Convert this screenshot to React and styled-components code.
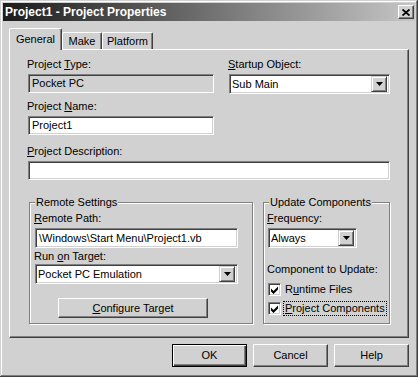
import React from 'react';
import styled, { createGlobalStyle } from 'styled-components';

const face = '#d1d1d1';
const shadow = '#808080';
const dark = '#404040';

const GlobalStyle = createGlobalStyle`
  html, body { margin: 0; padding: 0; background: ${face}; }
  body { font-family: "Liberation Sans", Arial, sans-serif; font-size: 11px; color: #000; }
`;

const Window = styled.div`
  width: 418px;
  height: 377px;
  box-sizing: border-box;
  padding: 3px;
  background: ${face};
  display: flex;
  flex-direction: column;
  box-shadow: inset -1px -1px ${dark}, inset 1px 1px ${face}, inset -2px -2px ${shadow}, inset 2px 2px #fff;
`;

const TitleBar = styled.div`
  height: 18px;
  display: flex;
  align-items: center;
  justify-content: space-between;
  padding: 0 1px 0 2px;
  background: linear-gradient(90deg, #1c1c1c 0%, #c6c6c6 100%);
`;

const TitleText = styled.span`
  color: #fff;
  font-weight: bold;
  font-size: 12px;
  line-height: 14px;
  white-space: nowrap;
`;

const CloseButton = styled.span`
  width: 16px;
  height: 14px;
  box-sizing: border-box;
  background: ${face};
  border: 1px solid;
  border-color: #fff ${dark} ${dark} #fff;
  box-shadow: inset -1px -1px ${shadow};
  display: flex;
  align-items: center;
  justify-content: center;
`;

const Body = styled.div`
  flex: 1;
  display: flex;
  flex-direction: column;
  padding: 7px 6px 0 6px;
`;

const TabStrip = styled.div`
  display: flex;
  align-items: flex-end;
  height: 22px;
  margin-bottom: -1px;
  position: relative;
  z-index: 1;
`;

const Tab = styled.div`
  width: ${p => p.$w}px;
  height: ${p => (p.$active ? 22 : 17)}px;
  margin-bottom: ${p => (p.$active ? 0 : 1)}px;
  box-sizing: border-box;
  background: ${face};
  border-top: 1px solid #fff;
  border-left: 1px solid #fff;
  border-right: 1px solid ${dark};
  border-radius: 2px 2px 0 0;
  box-shadow: inset -1px 0 ${shadow};
  display: flex;
  align-items: center;
  justify-content: center;
  padding-top: ${p => (p.$active ? 0 : 1)}px;
  line-height: 13px;
  white-space: nowrap;
`;

const Panel = styled.div`
  width: 400px;
  height: 289px;
  box-sizing: border-box;
  border: 1px solid;
  border-color: #fff ${dark} ${dark} #fff;
  box-shadow: inset -1px -1px ${shadow};
  padding: 8px 18px 0 18px;
  display: flex;
  flex-direction: column;
`;

const TopGrid = styled.div`
  display: grid;
  grid-template-columns: 186px 161px;
  column-gap: 15px;
  row-gap: 6px;
  align-items: start;
`;

const Field = styled.div`
  display: flex;
  flex-direction: column;
  gap: ${p => p.$gap ?? 3}px;
  margin-top: ${p => p.$mt ?? 0}px;
`;

const Label = styled.span`
  line-height: 13px;
  height: 13px;
  margin-left: -1px;
  white-space: nowrap;
`;

const Sunken = styled.div`
  width: ${p => (p.$w ? `${p.$w}px` : '100%')};
  height: ${p => p.$h ?? 19}px;
  box-sizing: border-box;
  background: ${p => (p.$readOnly ? face : '#fff')};
  border: 1px solid;
  border-color: ${shadow} #fff #fff ${shadow};
  box-shadow: inset 1px 1px ${dark}, inset -1px -1px ${face};
  display: flex;
  align-items: center;
  justify-content: space-between;
  padding: 2px 2px 2px ${p => p.$pl ?? 3}px;
  line-height: 13px;
  white-space: nowrap;
  overflow: hidden;
`;

const DropButton = styled.span`
  flex: none;
  width: 16px;
  height: 16px;
  box-sizing: border-box;
  background: ${face};
  border: 1px solid;
  border-color: ${face} ${dark} ${dark} ${face};
  box-shadow: inset 1px 1px #fff, inset -1px -1px ${shadow};
  display: flex;
  align-items: center;
  justify-content: center;
`;

const GroupRow = styled.div`
  display: flex;
  gap: 10px;
  margin-top: 22px;
  padding-left: 1px;
`;

const GroupBox = styled.div`
  position: relative;
  width: ${p => p.$w}px;
  height: 122px;
  box-sizing: border-box;
  border: 1px solid ${shadow};
  box-shadow: inset 1px 1px #fff, 1px 1px #fff;
  padding: 9px 0 0 ${p => p.$pl}px;
  display: flex;
  flex-direction: column;
`;

const Caption = styled.span`
  position: absolute;
  top: -7px;
  left: 5px;
  padding: 0 1px;
  background: ${face};
  line-height: 13px;
  white-space: nowrap;
`;

const Button = styled.div`
  width: ${p => p.$w}px;
  height: ${p => p.$h}px;
  box-sizing: border-box;
  background: ${face};
  border: 1px solid;
  border-color: ${p => (p.$default ? '#000' : `#fff ${dark} ${dark} #fff`)};
  box-shadow: ${p =>
    p.$default
      ? `inset 1px 1px #fff, inset -1px -1px ${dark}, inset -2px -2px ${shadow}`
      : `inset -1px -1px ${shadow}`};
  display: flex;
  align-items: center;
  justify-content: center;
  margin-left: ${p => p.$ml ?? 0}px;
  margin-top: ${p => p.$mt ?? 0}px;
  line-height: 13px;
  white-space: nowrap;
`;

const CheckList = styled.div`
  display: flex;
  flex-direction: column;
  gap: 2px;
  margin-top: 5px;
`;

const CheckRow = styled.div`
  display: flex;
  align-items: center;
  height: 17px;
  gap: 2px;
`;

const CheckBox = styled.span`
  width: 13px;
  height: 13px;
  box-sizing: border-box;
  background: #fff;
  border: 1px solid;
  border-color: ${shadow} #fff #fff ${shadow};
  box-shadow: inset 1px 1px ${dark}, inset -1px -1px ${face};
  display: flex;
  align-items: center;
  justify-content: center;
`;

const CheckText = styled.span`
  line-height: 13px;
  padding: 0 1px;
  border: 1px dotted ${p => (p.$focus ? '#000' : 'transparent')};
  white-space: nowrap;
`;

const ButtonRow = styled.div`
  display: flex;
  justify-content: flex-end;
  gap: 6px;
  margin-top: 6px;
  width: 400px;
`;

const Arrow = () => (
  <svg width="7" height="4" viewBox="0 0 7 4">
    <polygon points="0,0 7,0 3.5,4" fill="#000" />
  </svg>
);

const Check = () => (
  <svg width="7" height="8" viewBox="0 0 7 8">
    <polygon points="0,2.5 2.5,5 7,0.5 7,3.5 2.5,8 0,5.5" fill="#000" />
  </svg>
);

const Combo = ({ w, children }) => (
  <Sunken $w={w} $h={20} $pl={2}>
    <span>{children}</span>
    <DropButton>
      <Arrow />
    </DropButton>
  </Sunken>
);

export default function App() {
  return (
    <>
      <GlobalStyle />
      <Window>
        <TitleBar>
          <TitleText>Project1 - Project Properties</TitleText>
          <CloseButton>
            <svg width="8" height="7" viewBox="0 0 8 7">
              <path d="M0.5 0.5 L7.5 6.5 M7.5 0.5 L0.5 6.5" stroke="#000" strokeWidth="1.8" />
            </svg>
          </CloseButton>
        </TitleBar>
        <Body>
          <TabStrip>
            <Tab $w={53} $active>General</Tab>
            <Tab $w={40}>Make</Tab>
            <Tab $w={51}>Platform</Tab>
          </TabStrip>
          <Panel>
            <TopGrid>
              <Field>
                <Label>Project <u>T</u>ype:</Label>
                <Sunken $readOnly>Pocket PC</Sunken>
              </Field>
              <Field>
                <Label><u>S</u>tartup Object:</Label>
                <Combo w={161}>Sub Main</Combo>
              </Field>
              <Field>
                <Label>Project <u>N</u>ame:</Label>
                <Sunken>Project1</Sunken>
              </Field>
            </TopGrid>
            <Field $mt={10}>
              <Label><u>P</u>roject Description:</Label>
              <Sunken />
            </Field>
            <GroupRow>
              <GroupBox $w={224} $pl={5}>
                <Caption>Remote Settings</Caption>
                <Field>
                  <Label><u>R</u>emote Path:</Label>
                  <Sunken $w={203} $h={20}>\Windows\Start Menu\Project1.vb</Sunken>
                </Field>
                <Field $gap={1} $mt={2}>
                  <Label>Run <u>o</u>n Target:</Label>
                  <Combo w={203}>Pocket PC Emulation</Combo>
                </Field>
                <Button $w={150} $h={20} $ml={23} $mt={14}>
                  <span><u>C</u>onfigure Target</span>
                </Button>
              </GroupBox>
              <GroupBox $w={127} $pl={4}>
                <Caption>Update Components</Caption>
                <Field>
                  <Label><u>F</u>requency:</Label>
                  <Combo w={89}>Always</Combo>
                </Field>
                <Field $mt={15} $gap={0}>
                  <Label>Component to Update:</Label>
                  <CheckList>
                    <CheckRow>
                      <CheckBox><Check /></CheckBox>
                      <CheckText>R<u>u</u>ntime Files</CheckText>
                    </CheckRow>
                    <CheckRow>
                      <CheckBox><Check /></CheckBox>
                      <CheckText $focus><u>P</u>roject Components</CheckText>
                    </CheckRow>
                  </CheckList>
                </Field>
              </GroupBox>
            </GroupRow>
          </Panel>
          <ButtonRow>
            <Button $w={75} $h={23} $default>OK</Button>
            <Button $w={75} $h={23}>Cancel</Button>
            <Button $w={75} $h={23}>Help</Button>
          </ButtonRow>
        </Body>
      </Window>
    </>
  );
}
